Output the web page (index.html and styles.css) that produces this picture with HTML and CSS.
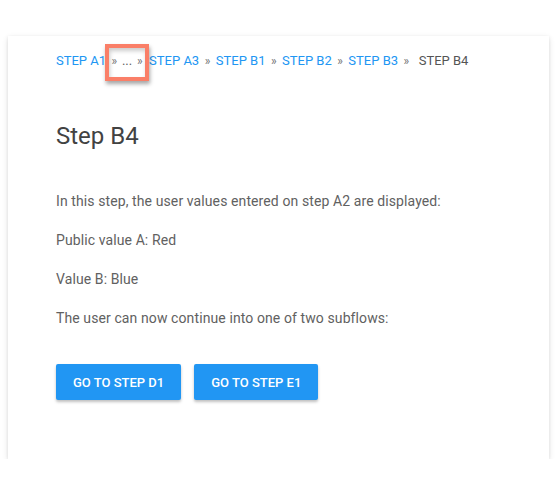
FILE: index.html
```html
<!DOCTYPE html>
<html>
<head>
<meta charset="utf-8">
<link rel="stylesheet" href="styles.css">
</head>
<body>
<div class="card">
  <nav class="crumbs">
    <a class="crumb">STEP A1</a><span class="hl"><span class="sep">»</span> <span class="dots">...</span> <span class="sep">»</span></span><a class="crumb">STEP A3</a>
    <span class="sep">»</span> <a class="crumb">STEP B1</a>
    <span class="sep">»</span> <a class="crumb">STEP B2</a>
    <span class="sep">»</span> <a class="crumb">STEP B3</a>
    <span class="sep">»</span> <span class="current">STEP B4</span>
  </nav>
  <h1 class="title">Step B4</h1>
  <p class="text">In this step, the user values entered on step A2 are displayed:</p>
  <p class="text">Public value A: Red</p>
  <p class="text">Value B: Blue</p>
  <p class="text">The user can now continue into one of two subflows:</p>
  <div class="actions">
    <button class="btn">GO TO STEP D1</button>
    <button class="btn">GO TO STEP E1</button>
  </div>
</div>
</body>
</html>
```
FILE: styles.css
```css
html, body {
  margin: 0;
  padding: 0;
  background: #fff;
}
body {
  font-family: Roboto, "Liberation Sans", sans-serif;
}
.card {
  margin: 36px 11px 0 8px;
  padding: 16px 48px 59px 48px;
  background: #fff;
  box-shadow: 0 2px 6px rgba(0,0,0,0.12), 0 1px 3px rgba(0,0,0,0.07);
}
.crumbs {
  font-size: 13px;
  line-height: 18px;
  height: 18px;
  white-space: nowrap;
  color: #616161;
}
.crumb {
  color: #2196f3;
  text-decoration: none;
}
.sep {
  color: #757575;
  font-size: 12px;
  margin: 0 2.25px;
}
.hl .sep {
  margin: 0 1.5px;
}
.dots {
  color: #616161;
}
.hl {
  position: relative;
  padding: 0 5px 0 4px;
}
.hl::after {
  content: "";
  position: absolute;
  left: -1px;
  right: 0;
  top: -9px;
  bottom: -13px;
  border: 4px solid #fa7f68;
  box-shadow: 1px 3px 4px rgba(0,0,0,0.35), inset 1px 3px 4px rgba(0,0,0,0.2);
}
.current {
  color: #555;
  margin-left: 4px;
}
.title {
  margin: 50px 0 0;
  font-size: 24px;
  line-height: 32px;
  font-weight: 400;
  color: #424242;
}
.text {
  margin: 19px 0 0;
  font-size: 14px;
  line-height: 20px;
  letter-spacing: 0.1px;
  color: #616161;
}
.title + .text {
  margin-top: 39px;
}
.actions {
  margin-top: 36px;
  display: flex;
  gap: 13px;
}
.btn {
  height: 36px;
  padding: 0 17px;
  border: 0;
  border-radius: 2px;
  background: #2196f3;
  color: #fff;
  font-family: Roboto, "Liberation Sans", sans-serif;
  font-size: 13px;
  font-weight: 500;
  box-shadow: 0 2px 3px rgba(0,0,0,0.25);
}
```
